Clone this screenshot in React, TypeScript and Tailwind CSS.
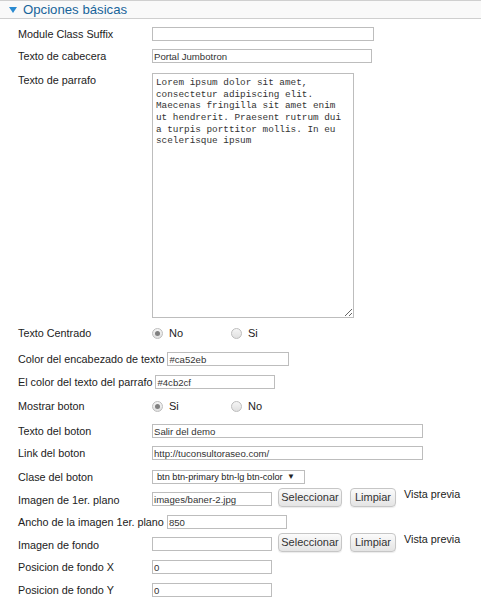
import React from "react"

const LABEL = "shrink-0 min-w-[134px] pr-[3px] whitespace-nowrap text-[10.8px] text-[#222]"
const INPUT =
  "h-[14px] border border-[#bdbdbd] bg-white px-[1px] text-[9.6px] leading-[12px] text-[#333] outline-none"

function Field({ value, className }: { value: string; className: string }) {
  return <input readOnly defaultValue={value} className={`${INPUT} ${className}`} />
}

function Radio({ checked, label }: { checked?: boolean; label: string }) {
  return (
    <div className="flex w-[79px] items-center">
      <span className="flex h-[11px] w-[11px] items-center justify-center rounded-full border border-[#bdbdbd] bg-gradient-to-b from-[#f5f5f5] to-[#e0e0e0]">
        {checked && <span className="h-[5px] w-[5px] rounded-full bg-[#808080]" />}
      </span>
      <span className="ml-[6px] text-[11px] text-[#222]">{label}</span>
    </div>
  )
}

function Btn({ children, className }: { children: React.ReactNode; className: string }) {
  return (
    <button
      className={`h-[19px] rounded-[4px] border border-[#c6c6c6] bg-gradient-to-b from-[#fbfbfb] to-[#e4e4e4] text-[11px] text-[#333] shadow-[0_1px_1px_rgba(0,0,0,0.08)] ${className}`}
    >
      {children}
    </button>
  )
}

function ImageRow({ label, value }: { label: string; value: string }) {
  return (
    <div className="flex h-[22px] items-start">
      <div className={`${LABEL} mt-[4px]`}>{label}</div>
      <Field value={value} className="mt-[4px] w-[120px]" />
      <Btn className="ml-[6px] w-[64px]">Seleccionar</Btn>
      <Btn className="ml-[8px] w-[46px]">Limpiar</Btn>
      <div className="ml-[8px] text-[10.8px] leading-[13px] text-[#222]">Vista previa</div>
    </div>
  )
}

const PARRAFO =
  "Lorem ipsum dolor sit amet, consectetur adipiscing elit. Maecenas fringilla sit amet enim ut hendrerit. Praesent rutrum dui a turpis porttitor mollis. In eu scelerisque ipsum"

export default function App() {
  return (
    <div className="h-[601px] w-[481px] overflow-hidden bg-white font-['Liberation_Sans',Arial,sans-serif]">
      {/* Panel header */}
      <div className="flex h-[19px] items-center border-y border-[#cfcfcf] bg-[#f9f9f9] pl-[9px]">
        <svg width="8" height="6" viewBox="0 0 8 6" className="mt-[1px]">
          <path d="M0 0h8L4 6z" fill="#2a8ad0" />
        </svg>
        <span className="ml-[6px] text-[13.2px] text-[#17649a]">Opciones básicas</span>
      </div>

      <div className="pl-[18px]">
        <div className="mt-[4px] flex h-[22px] items-center">
          <div className={LABEL}>Module Class Suffix</div>
          <Field value="" className="w-[222px]" />
        </div>

        <div className="flex h-[22px] items-center">
          <div className={LABEL}>Texto de cabecera</div>
          <Field value="Portal Jumbotron" className="w-[220px]" />
        </div>

        <div className="mt-[6px] flex items-start">
          <div className={`${LABEL} -mt-[1px]`}>Texto de parrafo</div>
          <textarea
            readOnly
            defaultValue={PARRAFO}
            className="h-[245px] w-[202px] border border-[#bdbdbd] bg-white pl-[3px] pr-[10px] pt-[3px] font-['Liberation_Mono',monospace] text-[9.35px] leading-[11.67px] text-[#333] outline-none"
          />
        </div>

        <div className="mt-[4px] flex h-[22px] items-center">
          <div className={LABEL}>Texto Centrado</div>
          <Radio checked label="No" />
          <Radio label="Si" />
        </div>

        <div className="mt-[4px] flex h-[22px] items-center">
          <div className={LABEL}>Color del encabezado de texto</div>
          <Field value="#ca52eb" className="w-[122px]" />
        </div>

        <div className="mt-[1px] flex h-[22px] items-center">
          <div className={LABEL}>El color del texto del parrafo</div>
          <Field value="#4cb2cf" className="w-[120px]" />
        </div>

        <div className="mt-[2px] flex h-[22px] items-center">
          <div className={LABEL}>Mostrar boton</div>
          <Radio checked label="Si" />
          <Radio label="No" />
        </div>

        <div className="mt-[3px] flex h-[22px] items-center">
          <div className={LABEL}>Texto del boton</div>
          <Field value="Salir del demo" className="w-[271px]" />
        </div>

        <div className="flex h-[22px] items-center">
          <div className={LABEL}>Link del boton</div>
          <Field value="http://tuconsultoraseo.com/" className="w-[271px]" />
        </div>

        <div className="mt-[2px] flex h-[22px] items-center">
          <div className={LABEL}>Clase del boton</div>
          <div className="flex h-[14px] w-[153px] items-center justify-between overflow-hidden whitespace-nowrap border border-[#bdbdbd] bg-white pl-[4px] pr-[9px] text-[9.2px] leading-[12px] text-[#222]">
            <span>btn btn-primary btn-lg btn-color</span>
            <span className="text-[8px]">▼</span>
          </div>
        </div>

        <ImageRow label="Imagen de 1er. plano" value="images/baner-2.jpg" />

        <div className="mt-[1px] flex h-[22px] items-center">
          <div className={LABEL}>Ancho de la imagen 1er. plano</div>
          <Field value="850" className="w-[120px]" />
        </div>

        <ImageRow label="Imagen de fondo" value="" />

        <div className="mt-[1px] flex h-[22px] items-center">
          <div className={LABEL}>Posicion de fondo X</div>
          <Field value="0" className="w-[120px]" />
        </div>

        <div className="mt-[1px] flex h-[22px] items-center">
          <div className={LABEL}>Posicion de fondo Y</div>
          <Field value="0" className="w-[120px]" />
        </div>
      </div>
    </div>
  )
}
